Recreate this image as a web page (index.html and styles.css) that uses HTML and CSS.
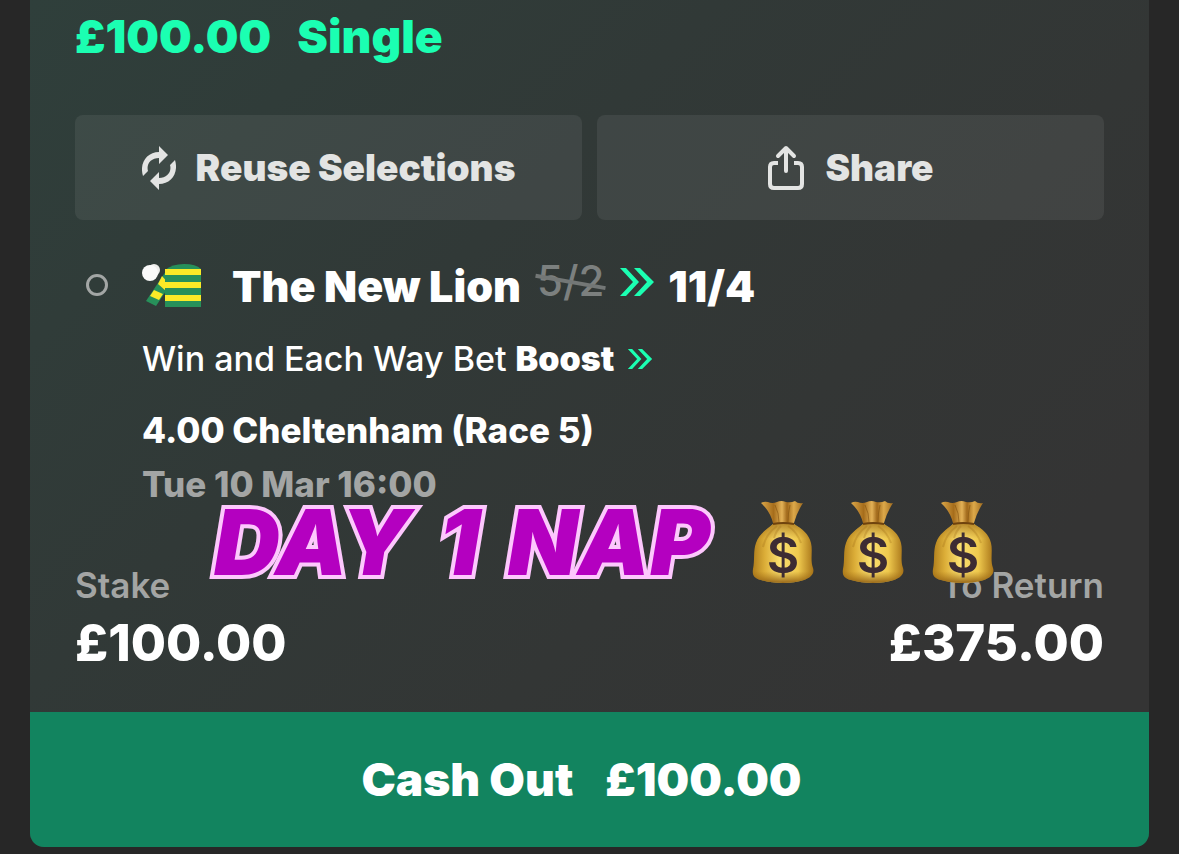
FILE: index.html
```html
<!DOCTYPE html>
<html lang="en">
<head>
  <meta charset="UTF-8">
  <meta name="viewport" content="width=device-width, initial-scale=1.0">
  <title>My Bets</title>
  <link rel="stylesheet" href="styles.css">
</head>
<body>
  <!-- Shared icons -->
  <svg class="sprite" width="0" height="0" aria-hidden="true">
    <defs>
      <linearGradient id="bagBody" x1="0" y1="0" x2="1" y2="0">
        <stop offset="0" stop-color="#b07e1c"/>
        <stop offset="0.2" stop-color="#dcae38"/>
        <stop offset="0.45" stop-color="#fbdf70"/>
        <stop offset="0.75" stop-color="#efc94e"/>
        <stop offset="1" stop-color="#a87418"/>
      </linearGradient>
      <linearGradient id="bagShade" x1="0" y1="0" x2="0" y2="1">
        <stop offset="0" stop-color="#a06b14" stop-opacity="0.7"/>
        <stop offset="0.25" stop-color="#a06b14" stop-opacity="0"/>
        <stop offset="0.8" stop-color="#a06b14" stop-opacity="0"/>
        <stop offset="1" stop-color="#8d5b10" stop-opacity="0.9"/>
      </linearGradient>
      <linearGradient id="bagNeck" x1="0" y1="0" x2="1" y2="0">
        <stop offset="0" stop-color="#dca84a"/>
        <stop offset="0.3" stop-color="#a66d1b"/>
        <stop offset="0.5" stop-color="#e3b257"/>
        <stop offset="0.62" stop-color="#a0681a"/>
        <stop offset="0.78" stop-color="#dda94a"/>
        <stop offset="1" stop-color="#a06c1f"/>
      </linearGradient>
      <symbol id="moneyBag" viewBox="0 0 62 84">
        <path d="M9 3Q12 1 16 2Q20 4 25 2Q29 0 34 2Q39 3 43 1Q46 4 51 3Q45 12 42 23H21Q18 11 9 3Z" fill="url(#bagNeck)"/>
        <path d="M23 5Q27 13 27 22M38 5Q36 13 36 22" fill="none" stroke="#82510f" stroke-width="1" opacity="0.6"/>
        <path d="M21 24H42C50 29 57 34 59 43C61 51 58 60 61 68C63 74 58 78 52 80C40 84 22 84 9 80C2 78 0 75 1 69C3 60 1 51 4 43C7 34 14 30 21 24Z" fill="url(#bagBody)"/>
        <path d="M21 24H42C50 29 57 34 59 43C61 51 58 60 61 68C63 74 58 78 52 80C40 84 22 84 9 80C2 78 0 75 1 69C3 60 1 51 4 43C7 34 14 30 21 24Z" fill="url(#bagShade)"/>
        <path d="M25 26Q14 34 11 47M29 26Q24 31 22 38M36 26Q45 32 49 43" fill="none" stroke="#a06c17" stroke-width="2" opacity="0.3"/>
        <path d="M21 24Q31 22 42 24" fill="none" stroke="#6f430e" stroke-width="2"/>
        <text class="bag-sign" x="31" y="73" text-anchor="middle">$</text>
      </symbol>
      <symbol id="chevrons" viewBox="0 0 34 28">
        <path d="M0 0H6L19 14L6 28H0L13 14ZM14 0H20L34 14L20 28H14L27 14Z" fill="#1bffb2"/>
      </symbol>
    </defs>
  </svg>

  <main class="bet-card">
    <section class="bet-body">
      <h1 class="bet-title"><span>£100.00</span><span>Single</span></h1>

      <div class="actions">
        <button type="button" class="action-btn">
          <svg class="icon-reuse" viewBox="0 0 34 44" aria-hidden="true">
            <path d="M1 30C-3 17 5 6 17 6V0L26 9L17 18V12C9 12 4 18 6 25Z" fill="#e3e4e3"/>
            <path d="M33 14C37 27 29 38 17 38V44L8 35L17 26V32C25 32 30 26 28 19Z" fill="#e3e4e3"/>
          </svg>
          Reuse Selections
        </button>
        <button type="button" class="action-btn">
          <svg class="icon-share" viewBox="0 0 38 46" aria-hidden="true">
            <path d="M11 18H7Q3 18 3 22V39Q3 43 7 43H31Q35 43 35 39V22Q35 18 31 18H27" fill="none" stroke="#e3e4e3" stroke-width="4"/>
            <path d="M19 26V4M11 11L19 3L27 11" fill="none" stroke="#e3e4e3" stroke-width="4" stroke-linecap="round" stroke-linejoin="round"/>
          </svg>
          Share
        </button>
      </div>

      <!-- Selection -->
      <div class="selection">
        <span class="bullet"></span>
        <div class="selection-info">
          <div class="runner">
            <svg class="silks" viewBox="0 0 60 44" aria-hidden="true">
              <path d="M24 7L32 15L14 42L4 37Z" fill="#27905a"/>
              <path d="M20 12L28 21L24 27L16 20ZM12 26L21 30L17 36L8 32Z" fill="#fbea27"/>
              <path d="M23 43V6Q30 0 42 0Q54 0 59 5V43Z" fill="#27905a"/>
              <path d="M23 5H59V11H23ZM23 18H59V24H23ZM23 31H59V37H23Z" fill="#fbea27"/>
              <circle cx="12" cy="6" r="6" fill="#eeeeec"/>
              <circle cx="8" cy="9" r="8" fill="#fafafa"/>
            </svg>
            <h2 class="runner-name">The New Lion</h2>
            <s class="old-odds">5/2</s>
            <svg class="boost-icon" aria-hidden="true"><use href="#chevrons"/></svg>
            <span class="new-odds">11/4</span>
          </div>
          <p class="market">Win and Each Way Bet <b>Boost</b>
            <svg class="boost-icon-small" aria-hidden="true"><use href="#chevrons"/></svg>
          </p>
          <p class="event">4.00 Cheltenham (Race 5)</p>
          <p class="event-time">Tue 10 Mar 16:00</p>
        </div>
      </div>

      <!-- Stake and return -->
      <dl class="totals">
        <div>
          <dt>Stake</dt>
          <dd>£100.00</dd>
        </div>
        <div class="total-return">
          <dt>To Return</dt>
          <dd>£375.00</dd>
        </div>
      </dl>
    </section>

    <button type="button" class="cash-out"><span>Cash Out</span><span>£100.00</span></button>

    <!-- Caption sticker over the card -->
    <div class="sticker">
      <p class="sticker-text"><span>DAY</span> <span>1</span> <span>NAP</span></p>
      <svg class="bag" aria-hidden="true"><use href="#moneyBag"/></svg>
      <svg class="bag" aria-hidden="true"><use href="#moneyBag"/></svg>
      <svg class="bag" aria-hidden="true"><use href="#moneyBag"/></svg>
    </div>
  </main>
</body>
</html>
```

FILE: styles.css
```css
* {
  box-sizing: border-box;
}
body {
  margin: 0;
  padding: 0 30px 7px;
  background-color: #272727;
  color: white;
  font-family: Inter, "Liberation Sans", sans-serif;
}
h1, h2, p, dl, dd {
  margin: 0;
}
button {
  border: none;
  font-family: inherit;
  cursor: pointer;
}
.sprite {
  position: absolute;
}

.bet-card {
  position: relative;
  border-radius: 0 0 14px 14px;
  overflow: hidden;
  background: linear-gradient(135deg, #2f3f3b 0%, #313937 35%, #333635 60%, #343434 80%);
}
.bet-body {
  padding: 6px 45px 39px;
}
.bet-title {
  display: flex;
  gap: 26px;
  color: #1bffb2;
  font-size: 46px;
  font-weight: 900;
  line-height: 60px;
}

/* Buttons */
.actions {
  display: grid;
  grid-template-columns: 1fr 1fr;
  gap: 15px;
  margin-top: 49px;
}
.action-btn {
  display: flex;
  align-items: center;
  justify-content: center;
  gap: 20px;
  height: 105px;
  border-radius: 8px;
  background-color: rgba(255, 255, 255, 0.07);
  color: #e3e4e3;
  font-size: 37px;
  font-weight: 900;
}
.icon-reuse {
  width: 34px;
  height: 44px;
}
.icon-share {
  width: 38px;
  height: 46px;
}

/* Selection */
.selection {
  display: flex;
  gap: 34px;
  margin-top: 36px;
  padding-left: 11px;
}
.bullet {
  width: 22px;
  height: 22px;
  margin-top: 18px;
  border: 3px solid #a3a6a5;
  border-radius: 50%;
}
.runner {
  display: flex;
  align-items: center;
  height: 60px;
  font-size: 43px;
}
.silks {
  width: 60px;
  height: 44px;
  margin-right: 30px;
}
.runner-name {
  font-size: 43px;
  font-weight: 900;
}
.old-odds {
  position: relative;
  margin: 0 16px;
  padding-bottom: 12px;
  color: #7c807f;
  font-size: 42px;
  font-weight: 500;
  text-decoration: none;
}
.old-odds::after {
  content: "";
  position: absolute;
  left: -2px;
  right: -2px;
  top: 25px;
  height: 4px;
  background-color: #737776;
  transform: rotate(10deg);
}
.boost-icon {
  width: 34px;
  height: 28px;
  margin-bottom: 8px;
}
.new-odds {
  margin-left: 14px;
  font-weight: 900;
}
.market, .event, .event-time {
  font-size: 35px;
  line-height: 48px;
}
.market {
  margin-top: 19px;
  font-size: 34px;
  font-weight: 500;
}
.market b {
  font-weight: 900;
}
.boost-icon-small {
  width: 26px;
  height: 20px;
  margin: 0 0 2px 4px;
}
.event {
  margin-top: 23px;
  font-weight: 800;
}
.event-time {
  margin-top: 6px;
  color: #a3a5a4;
  font-weight: 800;
}

/* Totals */
.totals {
  display: flex;
  justify-content: space-between;
  margin-top: 53px;
}
.totals dt {
  color: #a3a5a4;
  font-size: 35px;
  font-weight: 600;
  line-height: 48px;
}
.totals dd {
  margin-top: 4px;
  font-size: 51px;
  font-weight: 800;
  line-height: 60px;
}
.total-return {
  text-align: right;
}

.cash-out {
  display: flex;
  align-items: center;
  justify-content: center;
  gap: 32px;
  width: 100%;
  height: 135px;
  padding: 0 16px 2px 0;
  background-color: #12845f;
  color: white;
  font-size: 46px;
  font-weight: 900;
}

/* Sticker */
.sticker {
  position: absolute;
  top: 496px;
  left: 184px;
  display: flex;
  align-items: center;
  gap: 28px;
}
.sticker-text {
  display: flex;
  gap: 28px;
  margin-right: 14px;
  color: #b400c0;
  font-size: 91px;
  font-style: italic;
  font-weight: 900;
  line-height: 92px;
  -webkit-text-stroke: 8px #fdc8fd;
  paint-order: stroke fill;
}
.bag {
  width: 62px;
  height: 84px;
}
.bag-sign {
  fill: #3d2c33;
  font-size: 50px;
  font-weight: 600;
}
```
